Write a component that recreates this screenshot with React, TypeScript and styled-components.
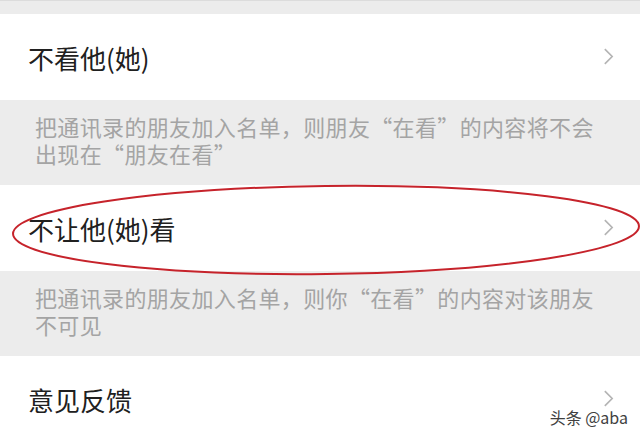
import styled, { createGlobalStyle } from "styled-components";

const GlobalStyle = createGlobalStyle`
  html, body {
    margin: 0;
    padding: 0;
    background: #ececec;
  }
  body {
    font-family: "Noto Sans CJK SC", "Noto Sans", sans-serif;
    -webkit-font-smoothing: antialiased;
  }
`;

type Item = { title: string; hint?: string[] };

const items: Array<Item> = [
  {
    title: "不看他(她)",
    hint: ["把通讯录的朋友加入名单，则朋友“在看”的内容将不会", "出现在“朋友在看”"],
  },
  {
    title: "不让他(她)看",
    hint: ["把通讯录的朋友加入名单，则你“在看”的内容对该朋友", "不可见"],
  },
  { title: "意见反馈" },
];

export default function App() {
  return (
    <Page>
      <GlobalStyle />
      <TopBand />
      {items.map((item) => (
        <div key={item.title}>
          <Row>
            <Title>{item.title}</Title>
            <Chevron />
          </Row>
          {item.hint && (
            <Hint>
              {item.hint.map((line) => (
                <HintLine key={line}>{line}</HintLine>
              ))}
            </Hint>
          )}
        </div>
      ))}
      {/* hand-drawn red mark round the second row */}
      <Circle viewBox="0 0 640 440">
        <ellipse
          cx="326"
          cy="230"
          rx="313"
          ry="44"
          transform="rotate(-0.7 326 230)"
          fill="none"
          stroke="#c6232b"
          strokeWidth="2"
        />
      </Circle>
      <Watermark>头条 @aba</Watermark>
    </Page>
  );
}

function Chevron() {
  return (
    <ChevronSvg viewBox="0 0 12 20">
      <path d="M2 2 L10 10 L2 18" fill="none" stroke="#b4b4b4" strokeWidth="1.8" />
    </ChevronSvg>
  );
}

const Page = styled.div`
  position: relative;
  width: 640px;
  height: 440px;
  overflow: hidden;
  background: #ececec;
`;

const TopBand = styled.div`
  height: 13px;
  border-top: 1px solid #dcdcdc;
  background: #ececec;
`;

const Row = styled.div`
  height: 86px;
  background: #ffffff;
  display: flex;
  align-items: center;
  justify-content: space-between;
  padding: 0 26px 0 28px;
  box-sizing: border-box;
`;

const Title = styled.span`
  font-size: 26px;
  color: #202020;
`;

const ChevronSvg = styled.svg`
  width: 11px;
  height: 19px;
  margin-top: -2px;
`;

const Hint = styled.div`
  height: 85px;
  box-sizing: border-box;
  padding: 13px 0 0 35px;
  color: #a4a4a4;
`;

const HintLine = styled.div`
  height: 27px;
  font-size: 22px;
  line-height: 27px;
  letter-spacing: 0.35px;
  white-space: nowrap;
`;

const Circle = styled.svg`
  position: absolute;
  left: 0;
  top: 0;
  width: 640px;
  height: 440px;
  pointer-events: none;
`;

const Watermark = styled.div`
  position: absolute;
  right: 12px;
  bottom: 11px;
  font-size: 16px;
  color: #404040;
  text-shadow: 0 0 2px #ffffff, 0 0 2px #ffffff;
`;
